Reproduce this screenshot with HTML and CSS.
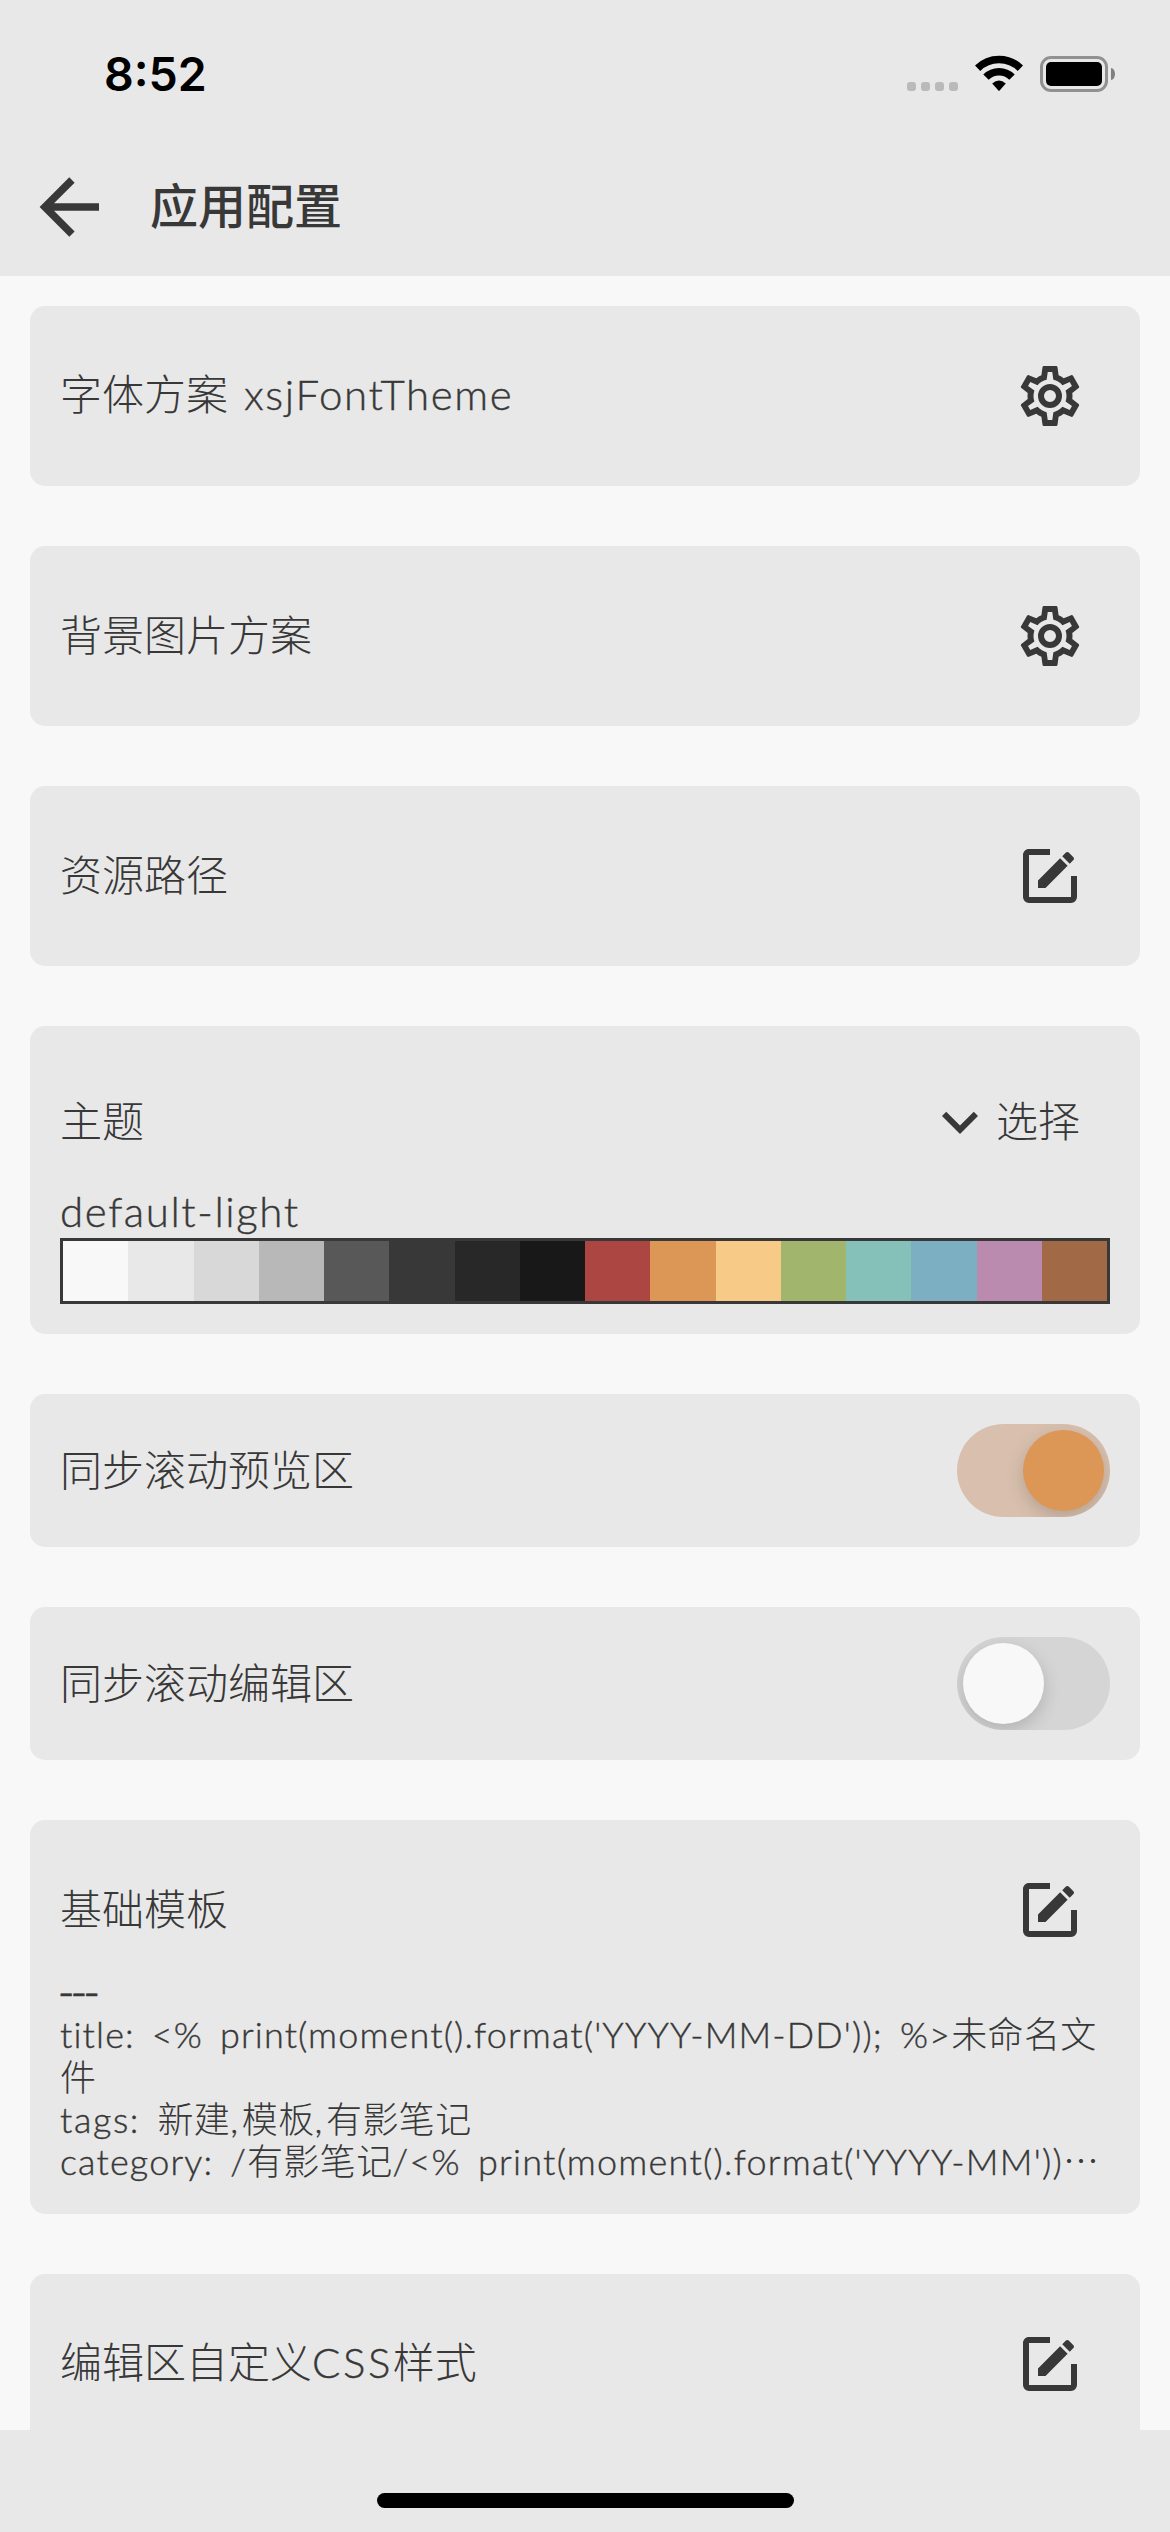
FILE: index.html
```html
<!DOCTYPE html>
<html lang="zh-CN">
<head>
<meta charset="utf-8">
<title>应用配置</title>
<link rel="stylesheet" href="styles.css">
</head>
<body>
<svg class="defs" aria-hidden="true">
  <symbol id="cog" viewBox="0 0 24 24"><path d="M12,8A4,4 0 0,1 16,12A4,4 0 0,1 12,16A4,4 0 0,1 8,12A4,4 0 0,1 12,8M12,10A2,2 0 0,0 10,12A2,2 0 0,0 12,14A2,2 0 0,0 14,12A2,2 0 0,0 12,10M10,22C9.75,22 9.54,21.82 9.5,21.58L9.13,18.93C8.5,18.68 7.96,18.34 7.44,17.94L4.95,18.95C4.73,19.03 4.46,18.95 4.34,18.73L2.34,15.27C2.21,15.05 2.27,14.78 2.46,14.63L4.57,12.97L4.5,12L4.57,11L2.46,9.37C2.27,9.22 2.21,8.95 2.34,8.73L4.34,5.27C4.46,5.05 4.73,4.96 4.95,5.05L7.44,6.05C7.96,5.66 8.5,5.32 9.13,5.07L9.5,2.42C9.54,2.18 9.75,2 10,2H14C14.25,2 14.46,2.18 14.5,2.42L14.87,5.07C15.5,5.32 16.04,5.66 16.56,6.05L19.05,5.05C19.27,4.96 19.54,5.05 19.66,5.27L21.66,8.73C21.79,8.95 21.73,9.22 21.54,9.37L19.43,11L19.5,12L19.43,13L21.54,14.63C21.73,14.78 21.79,15.05 21.66,15.27L19.66,18.73C19.54,18.95 19.27,19.04 19.05,18.95L16.56,17.95C16.04,18.34 15.5,18.68 14.87,18.93L14.5,21.58C14.46,21.82 14.25,22 14,22H10M11.25,4L10.88,6.61C9.68,6.86 8.62,7.5 7.85,8.39L5.44,7.35L4.69,8.65L6.8,10.2C6.4,11.37 6.4,12.64 6.8,13.8L4.68,15.36L5.43,16.66L7.86,15.62C8.63,16.5 9.68,17.14 10.87,17.38L11.24,20H12.76L13.13,17.39C14.32,17.14 15.37,16.5 16.14,15.62L18.57,16.66L19.32,15.36L17.2,13.81C17.6,12.64 17.6,11.37 17.2,10.2L19.31,8.65L18.56,7.35L16.15,8.39C15.38,7.5 14.32,6.86 13.12,6.62L12.75,4H11.25Z"/></symbol>
  <symbol id="edit" viewBox="0 0 24 24"><path d="M5,3C3.89,3 3,3.89 3,5V19A2,2 0 0,0 5,21H19A2,2 0 0,0 21,19V12H19V19H5V5H12V3H5M17.78,4C17.61,4 17.43,4.07 17.3,4.2L16.08,5.41L18.58,7.91L19.8,6.7C20.06,6.44 20.06,6 19.8,5.75L18.25,4.2C18.12,4.07 17.95,4 17.78,4M15.37,6.12L8,13.5V16H10.5L17.87,8.62L15.37,6.12Z"/></symbol>
</svg>

<header class="header">
  <div class="status">
    <span class="time">8:52</span>
    <div class="indicators">
      <span class="signal"><i></i><i></i><i></i><i></i></span>
      <svg class="wifi" viewBox="0 0 48 36" fill="none" stroke="#000">
        <path d="M2.6,13.2A30.5,30.5 0 0,1 45.4,13.2" stroke-width="7.6"/>
        <path d="M11,22.2A18.3,18.3 0 0,1 37,22.2" stroke-width="7.6"/>
        <path d="M17.2,28.4Q24,22.6 30.8,28.4L24.6,35.4Q24,36 23.4,35.4Z" fill="#000" stroke="none"/>
      </svg>
      <span class="battery"><span class="cell"><i></i></span><b></b></span>
    </div>
  </div>
  <div class="appbar">
    <svg class="back" viewBox="0 0 24 24"><path d="M20,11V13H8L13.5,18.5L12.08,19.92L4.16,12L12.08,4.08L13.5,5.5L8,11H20Z"/></svg>
    <h1 class="title">应用配置</h1>
  </div>
</header>

<main class="list">
  <section class="card">
    <div class="row">
      <span class="label">字体方案<span class="latin"> xsjFontTheme</span></span>
      <span class="icon-button"><svg class="icon"><use href="#cog"/></svg></span>
    </div>
  </section>

  <section class="card">
    <div class="row">
      <span class="label">背景图片方案</span>
      <span class="icon-button"><svg class="icon"><use href="#cog"/></svg></span>
    </div>
  </section>

  <section class="card">
    <div class="row">
      <span class="label">资源路径</span>
      <span class="icon-button"><svg class="icon"><use href="#edit"/></svg></span>
    </div>
  </section>

  <section class="card">
    <div class="row row-tall">
      <span class="label">主题</span>
      <span class="select">
        <svg class="icon" viewBox="0 0 24 24"><path d="M7.41,8.58L12,13.17L16.59,8.58L18,10L12,16L6,10L7.41,8.58Z"/></svg>
        <span class="label">选择</span>
      </span>
    </div>
    <div class="theme-name">default-light</div>
    <div class="palette">
      <i class="c0"></i><i class="c1"></i><i class="c2"></i><i class="c3"></i>
      <i class="c4"></i><i class="c5"></i><i class="c6"></i><i class="c7"></i>
      <i class="c8"></i><i class="c9"></i><i class="ca"></i><i class="cb"></i>
      <i class="cc"></i><i class="cd"></i><i class="ce"></i><i class="cf"></i>
    </div>
  </section>

  <section class="card">
    <div class="row row-switch">
      <span class="label">同步滚动预览区</span>
      <span class="switch on"><i></i></span>
    </div>
  </section>

  <section class="card">
    <div class="row row-switch">
      <span class="label">同步滚动编辑区</span>
      <span class="switch"><i></i></span>
    </div>
  </section>

  <section class="card card-template">
    <div class="row">
      <span class="label">基础模板</span>
      <span class="icon-button"><svg class="icon"><use href="#edit"/></svg></span>
    </div>
    <div class="code">
      <div><span class="latin dashes">---</span></div>
      <div><span class="latin title-line">title: &lt;% print(moment().format('YYYY-MM-DD')); %&gt;</span>未命名文</div>
      <div>件</div>
      <div><span class="latin tags">tags: </span>新建<span class="latin comma">,</span>模板<span class="latin comma">,</span>有影笔记</div>
      <div><span class="latin category">category: /</span>有影笔记<span class="latin category-tail">/&lt;% print(moment().format('YYYY-MM'))</span>⋯</div>
    </div>
  </section>

  <section class="card">
    <div class="row">
      <span class="label">编辑区自定义<span class="latin css">CSS</span>样式</span>
      <span class="icon-button"><svg class="icon"><use href="#edit"/></svg></span>
    </div>
  </section>
</main>

<footer class="footer"><span class="home-bar"></span></footer>
</body>
</html>
```
FILE: styles.css
```css
* { box-sizing: border-box; }

body {
  margin: 0;
  width: 1170px;
  height: 2532px;
  display: flex;
  flex-direction: column;
  overflow: hidden;
  background: #f8f8f8;
  color: #383838;
  fill: #383838;
  font-family: "Noto Sans CJK SC", sans-serif;
  font-weight: 300;
}

.defs { display: none; }

/* Header */
.header {
  flex: none;
  height: 276px;
  background: #e8e8e8;
}

.status {
  height: 138px;
  padding: 0 55px 0 104px;
  display: flex;
  justify-content: space-between;
  color: #000;
}

.time {
  padding-top: 46px;
  font: 600 46.5px/56px Inter, sans-serif;
}

.indicators {
  display: flex;
  align-items: flex-start;
  padding-top: 55px;
}

.signal { display: flex; gap: 5px; padding-top: 27px; }
.signal i { width: 9px; height: 9px; border-radius: 3px; background: #bababa; }

.wifi { width: 48px; height: 36px; margin-left: 17px; }

.battery { display: flex; align-items: center; gap: 3px; margin: 1px 0 0 17px; }
.cell {
  width: 68px;
  height: 36px;
  padding: 3px;
  border: 3px solid #919191;
  border-radius: 11px;
}
.cell i { display: block; height: 24px; border-radius: 5px; background: #000; }
.battery b { width: 4px; height: 12px; border-radius: 0 4px 4px 0 / 0 6px 6px 0; background: #808080; }

.appbar {
  height: 138px;
  padding-left: 24px;
  display: flex;
  align-items: center;
}
.back { width: 90px; height: 90px; }
.title {
  margin: 0 0 0 36px;
  padding-bottom: 8px;
  font-size: 48px;
  line-height: 60px;
  font-weight: 500;
}

/* Cards */
.list {
  flex: 1;
  min-height: 0;
  overflow: hidden;
  padding: 30px 30px 0;
  display: flex;
  flex-direction: column;
  gap: 60px;
}

.card {
  flex: none;
  padding: 30px;
  border-radius: 15px;
  background: #e8e8e8;
}
.card-template { height: 394px; }

.row {
  height: 120px;
  display: flex;
  align-items: center;
  justify-content: space-between;
}
.row-tall { height: 132px; }
.row-switch { height: 93px; }

.label {
  padding-bottom: 6px;
  font-size: 42px;
  line-height: 60px;
  white-space: nowrap;
}

.latin {
  font-family: Lato, sans-serif;
  letter-spacing: 1.6px;
  word-spacing: 3px;
  white-space: pre;
  -webkit-text-stroke: 0.4px #383838;
}
.latin.css { letter-spacing: 2.5px; }

.icon-button { width: 120px; display: flex; justify-content: center; }
.icon { width: 72px; height: 72px; }
.select { display: flex; align-items: center; padding-right: 30px; }

.theme-name {
  height: 50px;
  font: 300 42px/47px Lato, sans-serif;
  letter-spacing: 1.6px;
  -webkit-text-stroke: 0.4px #383838;
}

.palette {
  height: 66px;
  display: flex;
  border: 3px solid #383838;
}
.palette i { flex: 1; }
.c0 { background: #f8f8f8; }
.c1 { background: #e8e8e8; }
.c2 { background: #d8d8d8; }
.c3 { background: #b8b8b8; }
.c4 { background: #585858; }
.c5 { background: #383838; }
.c6 { background: #282828; }
.c7 { background: #181818; }
.c8 { background: #ab4642; }
.c9 { background: #dc9656; }
.ca { background: #f7ca88; }
.cb { background: #a1b56c; }
.cc { background: #86c1b9; }
.cd { background: #7cafc2; }
.ce { background: #ba8baf; }
.cf { background: #a16946; }

/* Switches */
.switch {
  width: 153px;
  height: 93px;
  padding: 6px;
  display: flex;
  overflow: hidden;
  border-radius: 47px;
  background: #d5d5d5;
}
.switch i {
  width: 81px;
  height: 81px;
  border-radius: 50%;
  background: #f8f8f8;
  box-shadow: 0 6px 18px rgba(0, 0, 0, 0.17);
}
.switch.on { justify-content: flex-end; background: #d9c0ae; }
.switch.on i { background: #dc9656; }

/* Template preview */
.code {
  margin-top: -1px;
  font-size: 36px;
  letter-spacing: 0.4px;
  white-space: nowrap;
}
.code div { height: 42.3px; line-height: 42.3px; }
.code .latin { word-spacing: 6px; }
.code .dashes { font-family: Inter, sans-serif; letter-spacing: -3.6px; margin-left: -2px; }
.code .title-line { letter-spacing: 1.14px; }
.code .tags { letter-spacing: 1.6px; }
.code .comma { letter-spacing: 3.6px; }
.code .category { letter-spacing: 1.15px; }
.code .category-tail { letter-spacing: 1.25px; }

/* Footer */
.footer {
  flex: none;
  height: 102px;
  padding-top: 63px;
  display: flex;
  justify-content: center;
  align-items: flex-start;
  background: #e8e8e8;
}
.home-bar { width: 417px; height: 15px; border-radius: 8px; background: #000; }
```
